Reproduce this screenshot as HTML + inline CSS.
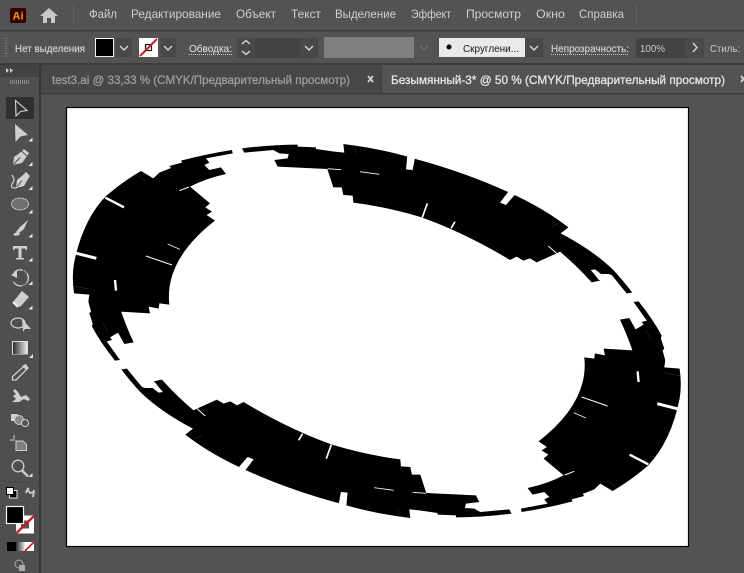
<!DOCTYPE html>
<html><head><meta charset="utf-8"><style>
html,body{margin:0;padding:0;background:#535353;width:744px;height:573px;overflow:hidden}
svg{display:block}
text{font-family:"Liberation Sans",sans-serif}
.m{font-size:12px;fill:#cfcfcf}
.c{font-size:10.5px;fill:#c8c8c8}
.b{stroke:#c8c8c8;stroke-width:.25}
.i{fill:#cfcfcf}
.o{fill:none;stroke:#cfcfcf;stroke-width:1.2}
.t{fill:#e6e6e6}
.ch{fill:none;stroke:#d8d8d8;stroke-width:1.4}
</style></head><body>
<svg width="744" height="573" viewBox="0 0 744 573" xmlns="http://www.w3.org/2000/svg">
<defs>
<linearGradient id="g"><stop offset="0" stop-color="#2e2e2e"/><stop offset="1" stop-color="#e8e8e8"/></linearGradient>
<g id="half">
<path fill="#000" d="M498 60 Q420 72 345 92 L348 98 L310 108 L315 114 L280 128 L262 145 L225 123 Q170 155 120 198 Q50 270 24 400 Q17 440 24 490 L70 494 L67 515 L75 545 L70 550 L80 580 L78 590 Q105 640 147 692 L162 690 L122 634 L138 630 L132 622 L156 608 L175 642 L203 637 Q178 585 158 522 L165 545 L252 550 L248 530 L278 536 L280 520 L310 524 Q295 390 447 272 L422 255 L438 245 L418 232 L432 220 L372 170 Q420 145 480 132 L465 112 L430 120 L415 105 L430 98 L420 85 L500 70 Z"/>
<path fill="#000" d="M528 55 Q620 44 695 44 L695 50 L750 52 L750 57 L805 65 L835 68 L832 42 L867 47 Q950 58 1042 85 Q1210 130 1352 198 Q1440 240 1507 292 L1484 310 Q1580 360 1642 420 Q1670 450 1699 488 L1682 490 L1637 435 L1627 432 L1605 432 L1587 418 L1574 420 L1602 452 L1577 457 Q1530 405 1482 365 L1472 370 L1412 397 L1392 385 L1372 392 L1352 380 L1332 390 Q1200 310 1067 262 Q960 230 862 218 L860 197 L832 195 L827 172 L802 172 L784 117 L635 110 L625 90 L665 85 L668 72 L640 70 L622 60 L535 68 Z"/>
<g fill="none" stroke="#fff">
<path stroke-width="7" d="M118 203 L174 232"/>
<path stroke-width="9" d="M24 368 L91 385"/>
<path stroke-width="7" d="M147 450 L150 482"/>
<path stroke-width="2.500" d="M305 342 L342 358"/>
<path stroke-width="3" d="M240 378 L318 405"/>
<path stroke-width="3" d="M340 182 L369 171"/>
<path stroke-width="2.500" d="M785 116 L825 119"/>
<path stroke-width="5" d="M1084 220 L1069 262"/>
<path stroke-width="5" d="M1167 275 L1155 295"/>
<path stroke-width="2.500" d="M882 125 L940 133"/>
<path stroke-width="3" d="M1447 348 L1472 370"/>
<path stroke-width="2.500" d="M1577 420 L1600 450"/>
</g>
<g fill="none" stroke="#555" stroke-width="1">
<path d="M215 135 L240 155"/><path d="M22 468 L70 478"/><path d="M110 575 L125 605"/>
<path d="M867 50 L869 70"/><path d="M1457 290 L1482 278"/>
</g>
<path fill="#fff" d="M1024 76 L1047 82 L1040 120 L1020 118 Z"/>
<path fill="#fff" d="M1327 185 L1346 195 L1320 225 L1302 218 Z"/>
</g>
</defs>
<rect width="744" height="573" fill="#535353"/>
<!-- menu bar -->
<rect x="0" y="30" width="744" height="1.500" fill="#3c3c3c"/>
<rect x="10" y="8" width="16" height="15" rx="2" fill="#330000"/>
<text x="18" y="19.500" text-anchor="middle" style="font-size:11px;font-weight:bold" fill="#ff9a00">Ai</text>
<path d="M49 8 L40 16 L43 16 L43 23 L47 23 L47 18 L51 18 L51 23 L55 23 L55 16 L58 16 Z" fill="#c8c8c8"/>
<rect x="73" y="5" width="1" height="20" fill="#626262"/>
<rect x="636" y="5" width="1" height="20" fill="#626262"/>
<text class="m" lengthAdjust="spacingAndGlyphs" x="89" y="18" textLength="28">Файл</text>
<text class="m" lengthAdjust="spacingAndGlyphs" x="131" y="18" textLength="90">Редактирование</text>
<text class="m" lengthAdjust="spacingAndGlyphs" x="236" y="18" textLength="40">Объект</text>
<text class="m" lengthAdjust="spacingAndGlyphs" x="291" y="18" textLength="30">Текст</text>
<text class="m" lengthAdjust="spacingAndGlyphs" x="335" y="18" textLength="61">Выделение</text>
<text class="m" lengthAdjust="spacingAndGlyphs" x="411" y="18" textLength="40">Эффект</text>
<text class="m" lengthAdjust="spacingAndGlyphs" x="466" y="18" textLength="55">Просмотр</text>
<text class="m" lengthAdjust="spacingAndGlyphs" x="536" y="18" textLength="29">Окно</text>
<text class="m" lengthAdjust="spacingAndGlyphs" x="579" y="18" textLength="45">Справка</text>
<!-- control bar -->
<rect x="0" y="63" width="744" height="2" fill="#3c3c3c"/>
<path d="M6 38 V58" stroke="#7a7a7a" stroke-width="2.500" stroke-dasharray="1 1.500"/>
<text class="c b" lengthAdjust="spacingAndGlyphs" x="15" y="52" textLength="70">Нет выделения</text>
<rect x="95.500" y="38.500" width="18" height="18" fill="#000" stroke="#f0f0f0"/>
<rect x="116" y="38" width="16" height="19" fill="#484848"/>
<path class="ch" d="M120 46 L124 50 L128 46"/>
<rect x="139" y="38" width="19" height="19" fill="#fff"/>
<rect x="145.500" y="44.500" width="6" height="6" fill="none" stroke="#111" stroke-width="1.200"/>
<path d="M140 56 L157 39" stroke="#c8202a" stroke-width="2"/>
<rect x="161" y="38" width="15" height="19" fill="#484848"/>
<path class="ch" d="M164 46 L168 50 L172 46"/>
<text class="c b" lengthAdjust="spacingAndGlyphs" x="189" y="52" textLength="43">Обводка:</text>
<path d="M189 54.500 H232" stroke="#c8c8c8" stroke-dasharray="1 1"/>
<rect x="237" y="38" width="81" height="20" fill="#484848"/>
<rect x="255" y="38" width="45" height="20" fill="#434343"/>
<path class="ch" d="M242 44 L246 40.500 L250 44 M242 51 L246 54.500 L250 51"/>
<path class="ch" d="M305 46 L309 50 L313 46"/>
<rect x="324" y="37" width="90" height="21" fill="#7f7f7f"/>
<path d="M420 46 L424 50 L428 46" fill="none" stroke="#6a6a6a" stroke-width="1.400"/>
<rect x="439" y="38" width="86" height="19" fill="#e9e9e9"/>
<circle cx="449" cy="47" r="2.500" fill="#000"/>
<text x="463" y="52" lengthAdjust="spacingAndGlyphs" textLength="56" style="font-size:10.500px" fill="#1a1a1a">Скруглени...</text>
<rect x="525" y="38" width="18" height="19" fill="#484848"/>
<path class="ch" d="M530 46 L534 50 L538 46"/>
<text class="c b" lengthAdjust="spacingAndGlyphs" x="551" y="52" textLength="78">Непрозрачность:</text>
<path d="M551 54.500 H629" stroke="#c8c8c8" stroke-dasharray="1 1"/>
<rect x="636" y="38" width="50" height="20" fill="#434343"/>
<rect x="686" y="38" width="18" height="20" fill="#4a4a4a"/>
<text class="c" lengthAdjust="spacingAndGlyphs" x="640" y="52" textLength="25">100%</text>
<path class="ch" d="M693 43 L697 47.500 L693 52"/>
<text class="c" lengthAdjust="spacingAndGlyphs" x="710" y="52" textLength="30">Стиль:</text>
<!-- tab bar -->
<rect x="41" y="65" width="340" height="29" fill="#474747"/>
<rect x="381" y="65" width="363" height="29" fill="#535353"/>
<rect x="381" y="65" width="1" height="29" fill="#3c3c3c"/>
<rect x="41" y="93" width="703" height="1.500" fill="#3c3c3c"/>
<text x="52" y="84" lengthAdjust="spacingAndGlyphs" textLength="298" style="font-size:12px;stroke:#9c9c9c;stroke-width:.3" fill="#9c9c9c">test3.ai @ 33,33 % (CMYK/Предварительный просмотр)</text>
<text x="391" y="84" lengthAdjust="spacingAndGlyphs" textLength="334" style="font-size:12px;stroke:#e4e4e4;stroke-width:.3" fill="#e4e4e4">Безымянный-3* @ 50 % (CMYK/Предварительный просмотр)</text>
<path d="M368 76 L373 82 M373 76 L368 82" stroke="#c8c8c8" stroke-width="2"/>
<path d="M741 76 L746 82 M746 76 L741 82" stroke="#c8c8c8" stroke-width="2"/>
<!-- toolbar -->
<rect x="0" y="65" width="40" height="12" fill="#424242"/>
<rect x="0" y="77" width="40" height="496" fill="#4f4f4f"/>
<rect x="39" y="65" width="2" height="508" fill="#383838"/>
<path d="M6 68 L9 70.500 L6 73 Z M10 68 L13 70.500 L10 73 Z" fill="#cfcfcf"/>
<path d="M10 82 H30" stroke="#8a8a8a" stroke-width="4" stroke-dasharray="1 1"/>
<rect x="6" y="97" width="28" height="22" fill="#303030"/>
<path d="M15.500 100.500 L27 110.500 L20.500 111.500 L16 116 Z" fill="none" stroke="#d8d8d8" stroke-width="1.100"/>
<path class="i" d="M15 124 L28 135 L20.500 136.500 L15.500 142 Z"/>
<path class="i" d="M24 149 L29 153 L27 156 L22 163 L13 165 L14 157 L21 152 Z"/>
<path d="M13.500 164.500 L20 157.500" stroke="#4f4f4f"/>
<path d="M21.500 151 L27 156" stroke="#4f4f4f"/>
<path class="i" d="M26 172 L30 176 L28 179 L24 186 L16 188 L17 180 L23 175 Z"/>
<path d="M16.500 187.500 L22 180.500" stroke="#4f4f4f"/>
<path class="o" d="M12 175 C14 178 15 180 12 184 C10 188 14 189 18 187"/>
<ellipse cx="20" cy="204" rx="8.500" ry="6" fill="#707070" stroke="#cfcfcf" stroke-width="1" stroke-dasharray="2 .6"/>
<path class="i" d="M28 220 L24 229 L19 233 L16 232 L20 227 Z M13 235 C16 231 18 232 20 234 C19 236 15 236 13 235 Z"/>
<path class="i" d="M13 246 H27 V250 H25.500 V248.500 H21.500 V258 H24 V259.500 H16 V258 H18.500 V248.500 H14.500 V250 H13 Z"/>
<path d="M14 273 A8 8 0 1 1 13 281" fill="none" stroke="#cfcfcf" stroke-width="1.300" stroke-dasharray="10 1 1 1 1 1"/>
<path class="i" d="M11 275 L17 271 L17 278 Z"/>
<path class="i" d="M22 291 L29 297 L20 307 L13 302 Z"/>
<path d="M13 302 L18 307" stroke="#ededed" stroke-width="2"/>
<ellipse cx="18" cy="323" rx="7" ry="5" fill="none" stroke="#cfcfcf" stroke-width="1.200"/>
<path class="i" d="M22 319 L31 329 L25 329 L23 332 Z"/>
<rect x="12.500" y="341.500" width="15" height="12.500" fill="#888" stroke="#ddd"/>
<rect x="13" y="342" width="14" height="12" fill="url(#g)"/>
<path d="M25 365 L28 368 L25 371 L16 380 L12.500 380 L12.500 376.500 L22 368 Z" fill="none" stroke="#cfcfcf" stroke-width="1.300"/>
<path class="i" d="M22 366 L26 364 L28 367 L26 370 Z"/>
<path class="i" d="M15 389 L18 392 L21 397 L26 395 L30 399 L28 401 L24 399 L19 402 L12 402 L16 399 L13 396 L16 394 L13 391 Z"/>
<rect x="11" y="414" width="7" height="7" class="i"/>
<circle cx="19" cy="420" r="4.500" fill="#888" stroke="#cfcfcf"/>
<circle cx="25" cy="423" r="3.500" fill="#535353" stroke="#cfcfcf"/>
<path d="M16 441 L23 441 L26.500 444.500 L26.500 450.500 L16 450.500 Z" fill="#808080" stroke="#cfcfcf"/>
<path d="M10 440 H15 M14 435 V439" stroke="#cfcfcf"/>
<circle cx="18" cy="466" r="5.800" fill="none" stroke="#cfcfcf" stroke-width="1.300"/>
<path d="M22 470.500 L28 476.500" stroke="#cfcfcf" stroke-width="2.500"/>
<path class="t" d="M32.500 137.500 V141.500 H28.500 Z M32.500 162 V166 H28.500 Z M32.500 186 V190 H28.500 Z M32.500 209.500 V213.500 H28.500 Z M32.500 233.500 V237.500 H28.500 Z M32.500 257.500 V261.500 H28.500 Z M32.500 281 V285 H28.500 Z M32.500 305.500 V309.500 H28.500 Z M33 354 V358 H29 Z M32.500 473 V477 H28.500 Z"/>
<path d="M8 482 H33" stroke="#444"/>
<rect x="9.500" y="490.500" width="7.500" height="7.500" fill="#000" stroke="#eee"/>
<rect x="6.500" y="487.500" width="7" height="7" fill="#fff" stroke="#000"/>
<path d="M27 489 L30 493 L34 492 M29 488 L27 490 L26 493 M34 490 L33 497" fill="none" stroke="#cfcfcf" stroke-width="1.800"/>
<rect x="16" y="515.500" width="18" height="18" fill="#fff"/>
<rect x="21" y="520.500" width="8" height="8" fill="#535353"/>
<path d="M16 533.500 L34 516" stroke="#c8202a" stroke-width="2.400"/>
<rect x="6.500" y="506.500" width="17" height="17" fill="#000" stroke="#f4f4f4" stroke-width="1.200"/>
<rect x="7" y="542" width="9" height="9" fill="#000"/>
<rect x="16" y="542" width="9" height="9" fill="url(#g)"/>
<rect x="25" y="542" width="9" height="9" fill="#fff"/>
<path d="M25 551 L34 542" stroke="#c8202a" stroke-width="1.800"/>
<circle cx="19" cy="564" r="4" fill="none" stroke="#aaa"/>
<rect x="19" y="565" width="6" height="6" fill="#aaa"/>
<!-- artboard -->
<rect x="66.500" y="107.500" width="622" height="439" fill="#fff" stroke="#000" stroke-width="1.200"/>
<use href="#half" transform="translate(66 130) scale(.33333)"/>
<use href="#half" transform="matrix(-1 0 0 -1 753.600 662) translate(66 130) scale(.33333)"/>
</svg>
</body></html>
